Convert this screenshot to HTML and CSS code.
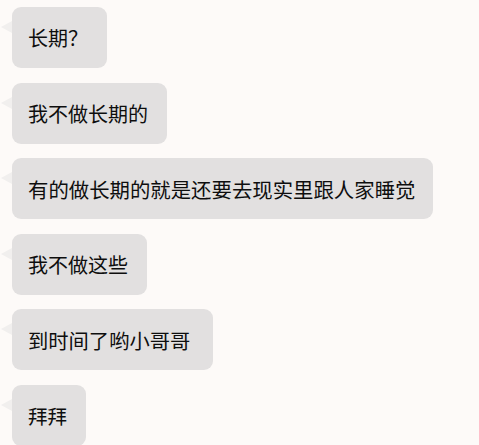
FILE: index.html
```html
<!DOCTYPE html>
<html lang="zh-CN">
<head>
<meta charset="utf-8">
<link rel="stylesheet" href="styles.css">
</head>
<body>
<div class="chat">
  <div class="bubble">长期？</div>
  <div class="bubble">我不做长期的</div>
  <div class="bubble wide">有的做长期的就是还要去现实里跟人家睡觉</div>
  <div class="bubble">我不做这些</div>
  <div class="bubble big">到时间了哟小哥哥</div>
  <div class="bubble small">拜拜</div>
</div>
</body>
</html>
```
FILE: styles.css
```css
html, body {
  margin: 0;
  padding: 0;
  background: #fdfaf8;
}
body {
  width: 479px;
  height: 445px;
  overflow: hidden;
  font-family: "Noto Sans CJK SC", "Noto Sans", sans-serif;
}
.chat {
  display: flex;
  flex-direction: column;
  align-items: flex-start;
  gap: 14.5px;
  padding: 7px 0 0 12px;
}
.bubble {
  position: relative;
  display: flex;
  align-items: center;
  height: 61px;
  box-sizing: border-box;
  padding: 1px 19px 0 16px;
  background: #e2e0e0;
  border-radius: 9px;
  color: #0e0e0e;
  font-size: 20px;
  line-height: 1;
  white-space: nowrap;
}
.bubble::before {
  content: "";
  position: absolute;
  left: -11px;
  top: 14px;
  width: 0;
  height: 0;
  border-top: 6px solid transparent;
  border-bottom: 6px solid transparent;
  border-right: 11px solid #f1efee;
}
.wide {
  font-size: 20.4px;
  padding-right: 18px;
}
.big {
  font-size: 20.3px;
  padding-right: 23px;
}
.small {
  font-size: 19.5px;
  padding-right: 19px;
}
```
